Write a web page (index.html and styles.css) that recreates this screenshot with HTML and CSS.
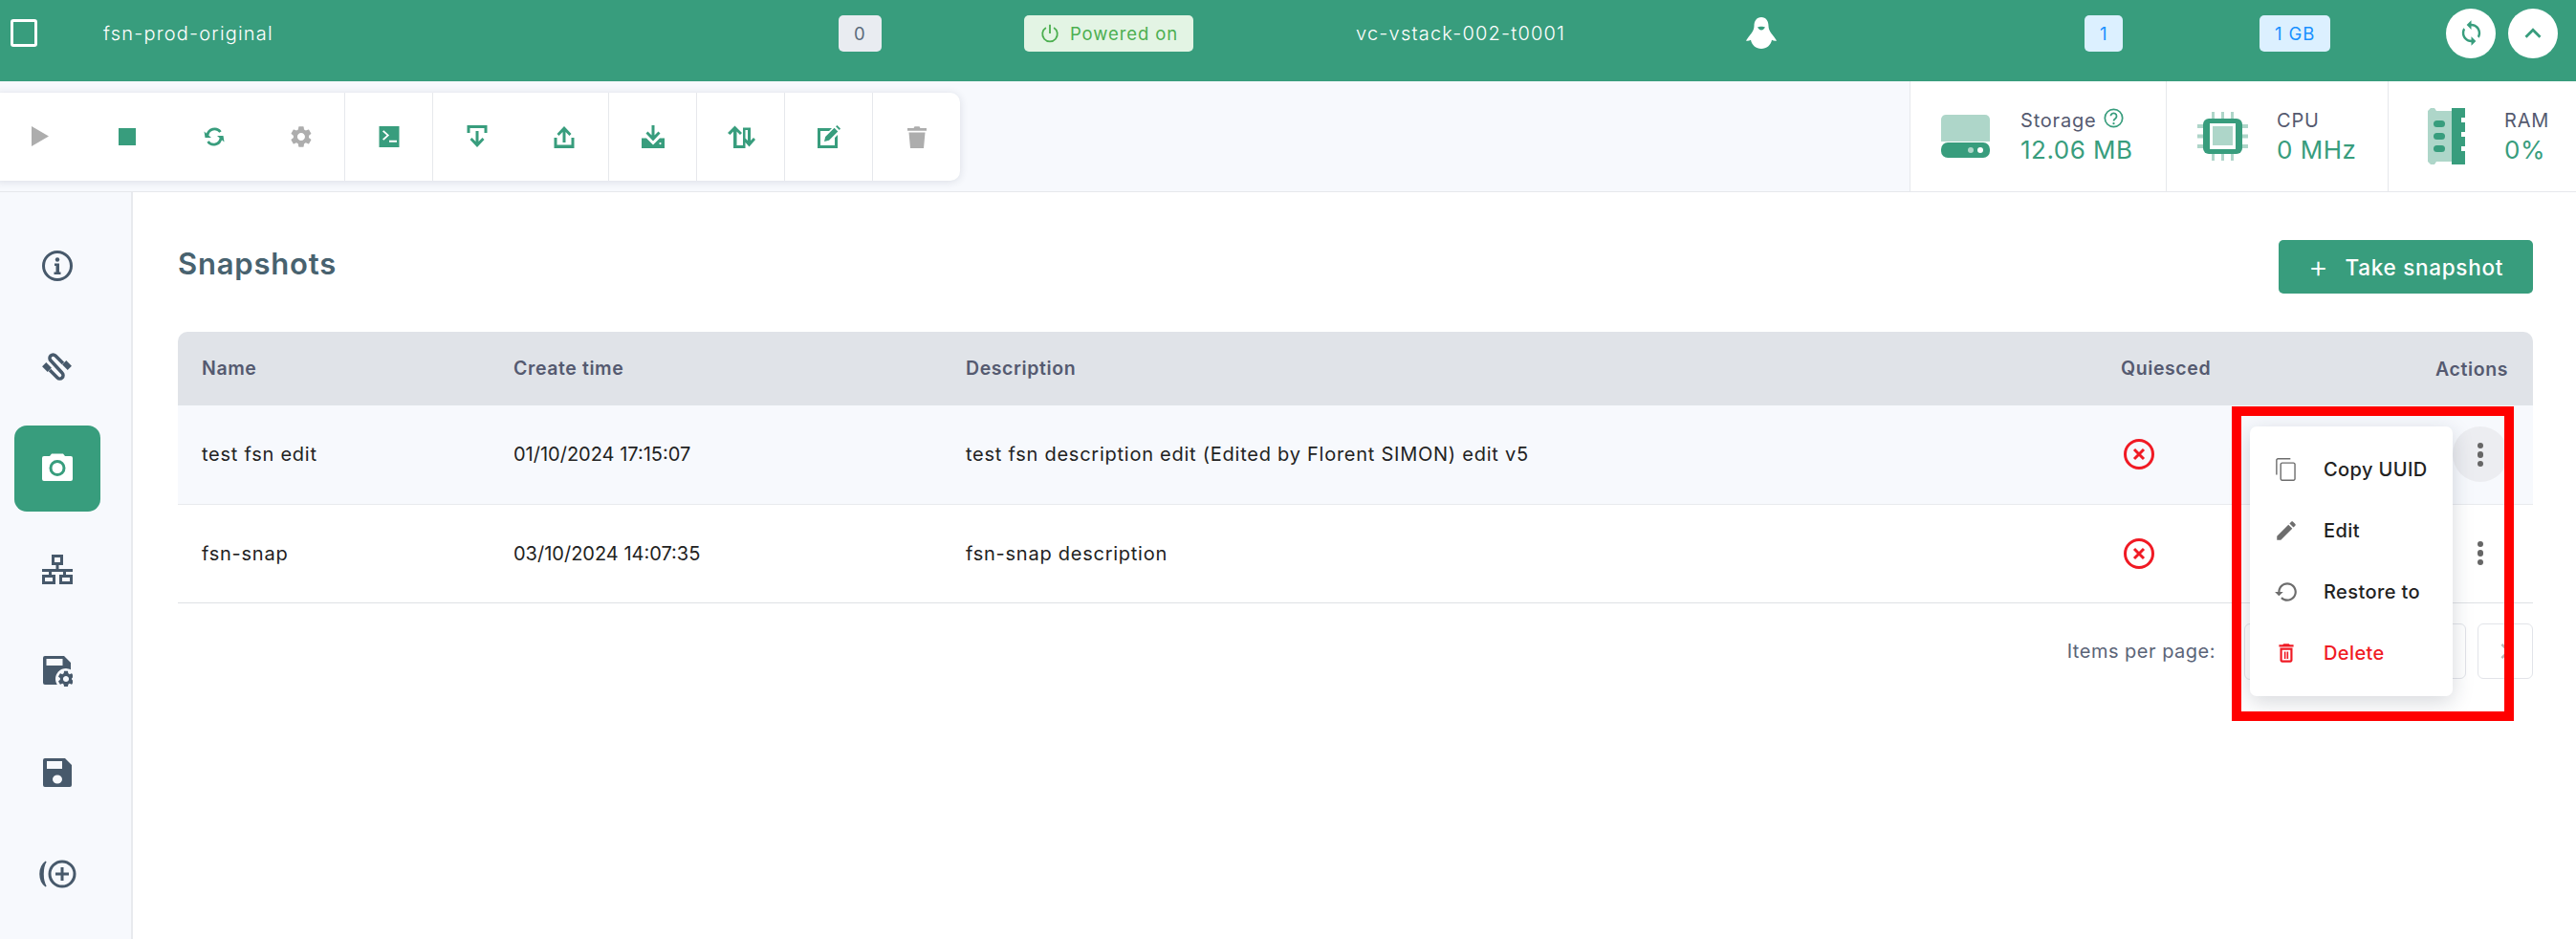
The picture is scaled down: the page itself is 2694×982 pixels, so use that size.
FILE: index.html
```html
<!DOCTYPE html>
<html lang="en">
<head>
    <meta charset="UTF-8">
    <meta name="viewport" content="width=device-width, initial-scale=1.0">
    <title>Snapshots</title>
    <link rel="stylesheet" href="styles.css">
</head>
<body>

    <header class="vm-row">
        <div class="vm-cell check-cell"><span class="checkbox"></span></div>
        <div class="vm-cell">fsn-prod-original</div>
        <div class="vm-cell"><span class="badge badge-grey">0</span></div>
        <div class="vm-cell">
            <span class="badge badge-green">
                <svg class="power-icon" viewBox="0 0 24 24"><path d="M12 2v10M7.500 5.500a8.500 8.500 0 1 0 9 0" fill="none" stroke="currentColor" stroke-width="2"/></svg>
                Powered on
            </span>
        </div>
        <div class="vm-cell">vc-vstack-002-t0001</div>
        <div class="vm-cell">
            <svg class="penguin" viewBox="0 0 32 33"><path d="M16 0c-5 0-7.500 4-7.500 9 0 3-1 5-3 8-2 2.500-4 5-5.500 7.500 1.500.5 3.500 0 5-.8C6 29 10.500 33 16 33s10-4 11-9.300c1.500.8 3.500 1.300 5 .8-1.500-2.500-3.500-5-5.500-7.500-2-3-3-5-3-8 0-5-2.500-9-7.500-9z" fill="#fff"/><path d="M12 10.500c2-1 6-1 8 0-1 1.500-2 3-4 3s-3-1.500-4-3z" fill="#389d7d"/></svg>
        </div>
        <div class="vm-cell"><span class="badge badge-blue">1</span></div>
        <div class="vm-cell"><span class="badge badge-blue">1 GB</span></div>
        <div class="vm-cell round-btns">
            <button class="round-btn sync-btn">
                <svg viewBox="0 0 24 24"><path d="M12 4V1L8 5l4 4V6c3.310 0 6 2.690 6 6 0 1.010-.25 1.970-.7 2.800l1.460 1.460C19.540 15.030 20 13.570 20 12c0-4.420-3.580-8-8-8zm0 14c-3.310 0-6-2.690-6-6 0-1.010.25-1.970.7-2.800L5.240 7.740C4.460 8.970 4 10.430 4 12c0 4.420 3.580 8 8 8v3l4-4-4-4v3z"/></svg>
            </button>
            <button class="round-btn">
                <svg viewBox="0 0 24 24"><path d="M7.410 15.410 12 10.830l4.590 4.580L18 14l-6-6-6 6z"/></svg>
            </button>
        </div>
    </header>

    <section class="tool-strip">
        <div class="toolbar">
            <div class="tool-group first">
                <span class="tool off"><svg viewBox="0 0 24 24"><path d="M3 1v21l18-10.500z"/></svg></span>
                <span class="tool"><svg viewBox="0 0 24 24"><path d="M3 3h18v18H3z"/></svg></span>
                <span class="tool">
                    <svg viewBox="0 0 24 24"><path d="M5 10.500A7.500 7.500 0 0 1 18.500 7M19 13.500A7.500 7.500 0 0 1 5.500 17" fill="none" stroke="currentColor" stroke-width="2.800"/><path d="M1.500 6.500l1 6.500h6.500zM22.500 17.500l-1-6.500H15z"/></svg>
                </span>
                <span class="tool off">
                    <svg viewBox="0 0 24 24"><path d="M19.140 12.940c.04-.3.06-.61.06-.94 0-.32-.02-.64-.07-.94l2.030-1.580c.18-.14.23-.41.12-.61l-1.920-3.320c-.12-.22-.37-.29-.59-.22l-2.390.96c-.5-.38-1.030-.7-1.620-.94l-.36-2.540c-.04-.24-.24-.41-.48-.41h-3.840c-.24 0-.43.17-.47.41l-.36 2.540c-.59.24-1.130.57-1.620.94l-2.390-.96c-.22-.08-.47 0-.59.22L2.740 8.870c-.12.21-.08.47.12.61l2.030 1.580c-.05.3-.09.63-.09.94s.02.64.07.94l-2.030 1.580c-.18.14-.23.41-.12.61l1.920 3.320c.12.22.37.29.59.22l2.390-.96c.5.38 1.030.7 1.620.94l.36 2.540c.05.24.24.41.48.41h3.840c.24 0 .44-.17.47-.41l.36-2.540c.59-.24 1.130-.56 1.620-.94l2.390.96c.22.08.47 0 .59-.22l1.920-3.320c.12-.22.07-.47-.12-.61l-2.010-1.580zM12 15.600c-1.980 0-3.600-1.620-3.600-3.600s1.620-3.600 3.600-3.600 3.600 1.620 3.600 3.600-1.620 3.600-3.600 3.600z" transform="translate(-1.500 -1.500) scale(1.120)"/></svg>
                </span>
            </div>
            <span class="tool ruled">
                <svg viewBox="0 0 24 24"><path fill-rule="evenodd" d="M1.500 1h21v22h-21zM5 6.500l4.500 4-4.500 4 1.300 1.300 5.800-5.300-5.800-5.300zM12 15.700v2.100h8v-2.100z"/></svg>
            </span>
            <div class="tool-group ruled">
                <span class="tool">
                    <svg viewBox="0 0 24 24"><path d="M1.500 0h21v8h-3V3h-15v5h-3z"/><path d="M10.500 6h3v11l4-4 2 2-7.500 8L4.500 15l2-2 4 4z"/></svg>
                </span>
                <span class="tool">
                    <svg viewBox="0 0 24 24"><path d="M1.500 13h3v7.500h15V13h3v11h-21z"/><path d="M10.500 18h3V7l4 4 2-2L12 1 4.500 9l2 2 4-4z"/></svg>
                </span>
            </div>
            <span class="tool ruled">
                <svg viewBox="0 0 24 24"><path d="M10.500 0h3v10.500l4-4 2 2-7.500 8-7.500-8 2-2 4 4z"/><path fill-rule="evenodd" d="M5 13.500l7 7 7-7h5V24H0V13.500zM19.500 18a1.100 1.100 0 1 0 0 2.200 1.100 1.100 0 0 0 0-2.200z"/></svg>
            </span>
            <span class="tool ruled wide-icon">
                <svg viewBox="0 0 30 24"><path d="M7 24V6.500L3.500 10 1 8l7.500-7.500L16 8l-2 2-3.500-3.500V21h6.500V2.500H25V16l3-3 2 2-6.500 7.500L17 15l2-2 3 3V5h-2.500v19z"/></svg>
            </span>
            <span class="tool ruled">
                <svg viewBox="0 0 24 24"><path d="M0 3h15l-3 3H3v15h15v-8l3-3v14H0z"/><path d="M7 17l1.200-5 9.300-9.300 3.800 3.800-9.300 9.300zM19 1.200l1.500-1.200 3.500 3.500-1.200 1.500z"/></svg>
            </span>
            <span class="tool ruled off">
                <svg viewBox="0 0 24 24"><path d="M2 3h6.500l1-1.800h5l1 1.800H22v2.800H2zM3.500 7.500h17L19 24H5z"/></svg>
            </span>
        </div>

        <div class="stats">
            <div class="stat stat-storage">
                <svg class="stat-icon" width="51" height="45" viewBox="0 0 51 45">
                    <path d="M5 0h41a5 5 0 0 1 5 5v23H0V5a5 5 0 0 1 5-5z" fill="#aed6c9"/>
                    <path d="M7 29h37a7 7 0 0 1 7 7v2a7 7 0 0 1-7 7H7a7 7 0 0 1-7-7v-2a7 7 0 0 1 7-7z" fill="#389d7d"/>
                    <circle cx="31" cy="37" r="3" fill="#aed6c9"/>
                    <circle cx="41" cy="37" r="3" fill="#fff"/>
                </svg>
                <div class="stat-text">
                    <span class="stat-label">Storage
                        <svg class="help-icon" viewBox="0 0 24 24"><circle cx="12" cy="12" r="10.500" fill="none" stroke="currentColor" stroke-width="2"/><path d="M8.500 9.500a3.500 3.500 0 1 1 5.500 3c-1.300.9-2 1.400-2 3" fill="none" stroke="currentColor" stroke-width="2"/><circle cx="12" cy="18.500" r="1.300" fill="currentColor"/></svg>
                    </span>
                    <span class="stat-value">12.06 MB</span>
                </div>
            </div>
            <div class="stat stat-cpu">
                <svg class="stat-icon" width="53" height="51" viewBox="0 0 53 51">
                    <path d="M15 0h3v8h-3zM25 0h3v8h-3zM35 0h3v8h-3zM15 43h3v8h-3zM25 43h3v8h-3zM35 43h3v8h-3zM0 13h8v4H0zM0 23.500h8v4H0zM0 34h8v4H0zM45 13h8v4h-8zM45 23.500h8v4h-8zM45 34h8v4h-8z" fill="#aed6c9"/>
                    <rect x="6" y="7" width="41" height="37" rx="6" fill="#389d7d"/>
                    <rect x="13" y="12" width="27" height="27" fill="#fff"/>
                    <rect x="16" y="15" width="21" height="20" fill="#aed6c9"/>
                </svg>
                <div class="stat-text">
                    <span class="stat-label">CPU</span>
                    <span class="stat-value">0 MHz</span>
                </div>
            </div>
            <div class="stat stat-ram">
                <svg class="stat-icon" width="39" height="59" viewBox="0 0 39 59">
                    <path d="M3 0h4l2 3h16v53H9l-2 3H3l-3-3V3z" fill="#aed6c9"/>
                    <path d="M25 0h14v10h-4v5h4v10h-4v5h4v10h-4v5h4v14H25z" fill="#389d7d"/>
                    <rect x="6" y="13" width="12" height="7" rx="3.500" fill="#389d7d"/>
                    <rect x="6" y="26" width="12" height="7" rx="3.500" fill="#389d7d"/>
                    <rect x="6" y="39" width="12" height="7" rx="3.500" fill="#389d7d"/>
                </svg>
                <div class="stat-text">
                    <span class="stat-label">RAM</span>
                    <span class="stat-value">0%</span>
                </div>
            </div>
        </div>
    </section>

    <div class="page">
        <nav class="sidebar">
            <a class="nav-item">
                <svg viewBox="0 0 32 32"><circle cx="16" cy="16" r="14.500" fill="none" stroke="currentColor" stroke-width="3"/><circle cx="16" cy="9.500" r="2.200"/><path d="M13 13.500h5v9h1.500v2.500h-7v-2.500H14.500v-6.500H13z"/></svg>
            </a>
            <a class="nav-item">
                <svg viewBox="0 0 32 32"><path d="M8 19l8 8a3.500 3.500 0 0 0 5-5L9 9a3.500 3.500 0 0 1 5-5l8 8" fill="none" stroke="currentColor" stroke-width="3.500"/><rect x="1" y="13" width="8" height="6" transform="rotate(45 5 16)"/><rect x="22" y="11" width="8" height="6" transform="rotate(45 26 14)"/></svg>
            </a>
            <a class="nav-item active">
                <svg viewBox="0 0 32 32"><path d="M2 3h6l2-2.500h12L24 3h6a2 2 0 0 1 2 2v22a2 2 0 0 1-2 2H2a2 2 0 0 1-2-2V5a2 2 0 0 1 2-2z" fill="#fff"/><circle cx="16" cy="15.500" r="7" fill="#fff" stroke="#389d7d" stroke-width="3"/></svg>
            </a>
            <a class="nav-item">
                <svg viewBox="0 0 32 32"><path fill-rule="evenodd" d="M10 0h12v11h-4.500v4H32v3h-7v3h7v10H18V21h4v-3H10v3h4v10H0V21h7v-3H0v-3h14.500v-4H10zM13 3v5h6V3zM3 24v4h8v-4zM21 24v4h8v-4z"/></svg>
            </a>
            <a class="nav-item">
                <svg viewBox="0 0 32 32"><path fill-rule="evenodd" d="M3 0h20l7 7v20a3 3 0 0 1-3 3H3a2 2 0 0 1-2-2V2a2 2 0 0 1 2-2zM4.500 3v7h17V3z"/><circle cx="25" cy="24" r="11" fill="#f7f9fd"/><path fill-rule="evenodd" d="M19.140 12.940c.04-.3.06-.61.06-.94 0-.32-.02-.64-.07-.94l2.030-1.580c.18-.14.23-.41.12-.61l-1.920-3.320c-.12-.22-.37-.29-.59-.22l-2.390.96c-.5-.38-1.030-.7-1.620-.94l-.36-2.540c-.04-.24-.24-.41-.48-.41h-3.840c-.24 0-.43.17-.47.41l-.36 2.540c-.59.24-1.130.57-1.620.94l-2.390-.96c-.22-.08-.47 0-.59.22L2.740 8.870c-.12.21-.08.47.12.61l2.030 1.580c-.05.3-.09.63-.09.94s.02.64.07.94l-2.030 1.580c-.18.14-.23.41-.12.61l1.920 3.320c.12.22.37.29.59.22l2.390-.96c.5.38 1.030.7 1.620.94l.36 2.540c.05.24.24.41.48.41h3.840c.24 0 .44-.17.47-.41l.36-2.540c.59-.24 1.130-.56 1.620-.94l2.390.96c.22.08.47 0 .59-.22l1.920-3.320c.12-.22.07-.47-.12-.61l-2.010-1.580zM12 15.600c-1.980 0-3.600-1.620-3.600-3.600s1.620-3.600 3.600-3.600 3.600 1.620 3.600 3.600-1.620 3.600-3.600 3.600z" transform="translate(14.800 13.800) scale(.85)"/></svg>
            </a>
            <a class="nav-item">
                <svg viewBox="0 0 32 32"><path fill-rule="evenodd" d="M3 1h21l7 7v21a2 2 0 0 1-2 2H3a2 2 0 0 1-2-2V3a2 2 0 0 1 2-2zM5 4v8h16V4zM16 18.500a5 4.500 0 1 0 0 9 5 4.500 0 0 0 0-9z"/></svg>
            </a>
            <a class="nav-item wide">
                <svg viewBox="0 0 40 30"><circle cx="25" cy="15" r="13" fill="none" stroke="currentColor" stroke-width="3"/><path d="M23.500 8h3v5.500H32v3h-5.500V22h-3v-5.500H18v-3h5.500z"/><path d="M8 2C0 8 0 22 8 28 4 21 4 9 8 2z" stroke="currentColor" stroke-width="1.500"/></svg>
            </a>
        </nav>

        <main class="content">
            <div class="title-row">
                <h1>Snapshots</h1>
                <button class="primary-btn"><span class="plus">+</span> Take snapshot</button>
            </div>

            <table class="snap-table">
                <thead>
                    <tr>
                        <th class="col-name">Name</th>
                        <th class="col-time">Create time</th>
                        <th class="col-desc">Description</th>
                        <th class="col-quiesced">Quiesced</th>
                        <th class="col-actions">Actions</th>
                    </tr>
                </thead>
                <tbody>
                    <tr class="selected">
                        <td>test fsn edit</td>
                        <td class="num">01/10/2024 17:15:07</td>
                        <td>test fsn description edit (Edited by Florent SIMON) edit v5</td>
                        <td>
                            <svg class="no-icon" viewBox="0 0 32 32"><circle cx="16" cy="16" r="14.500" fill="none" stroke="#f01a24" stroke-width="3"/><path d="M11 11l10 10M21 11L11 21" stroke="#f01a24" stroke-width="3"/></svg>
                        </td>
                        <td class="col-actions">
                            <button class="kebab open"><i></i><i></i><i></i></button>
                        </td>
                    </tr>
                    <tr>
                        <td>fsn-snap</td>
                        <td class="num">03/10/2024 14:07:35</td>
                        <td>fsn-snap description</td>
                        <td>
                            <svg class="no-icon" viewBox="0 0 32 32"><circle cx="16" cy="16" r="14.500" fill="none" stroke="#f01a24" stroke-width="3"/><path d="M11 11l10 10M21 11L11 21" stroke="#f01a24" stroke-width="3"/></svg>
                        </td>
                        <td class="col-actions">
                            <button class="kebab"><i></i><i></i><i></i></button>
                        </td>
                    </tr>
                </tbody>
            </table>

            <div class="pager">
                <span class="pager-label">Items per page:</span>
                <span class="pager-select">10</span>
                <span class="pager-btn">
                    <svg viewBox="0 0 24 24"><path d="M15.400 7.400 14 6l-6 6 6 6 1.400-1.400L10.800 12z"/></svg>
                </span>
                <span class="pager-btn">
                    <svg viewBox="0 0 24 24"><path d="M8.600 7.400 10 6l6 6-6 6-1.400-1.400L13.200 12z"/></svg>
                </span>
            </div>

            <!-- open action menu + the red mark drawn over the screenshot -->
            <ul class="menu">
                <li>
                    <svg viewBox="0 0 24 24"><path d="M16 1H4c-1.100 0-2 .9-2 2v14h1.300V3c0-.4.3-.7.7-.7h12zm3 4H8c-1.100 0-2 .9-2 2v14c0 1.100.9 2 2 2h11c1.100 0 2-.9 2-2V7c0-1.100-.9-2-2-2zm.7 16c0 .4-.3.7-.7.7H8c-.4 0-.7-.3-.7-.7V7c0-.4.3-.7.7-.7h11c.4 0 .7.3.7.7z"/></svg>
                    Copy UUID
                </li>
                <li>
                    <svg viewBox="0 0 24 24"><path d="M3 17.250V21h3.750L17.810 9.940l-3.750-3.750L3 17.250zM20.710 7.040c.39-.39.39-1.020 0-1.410l-2.340-2.340c-.39-.39-1.020-.39-1.410 0l-1.830 1.830 3.750 3.750 1.830-1.830z"/></svg>
                    Edit
                </li>
                <li>
                    <svg viewBox="0 0 24 24"><path d="M13 3c-4.970 0-9 4.030-9 9H1l3.890 3.890.07.14L9 12H6c0-3.870 3.130-7 7-7s7 3.130 7 7-3.130 7-7 7c-1.930 0-3.680-.79-4.940-2.060l-1.420 1.420C8.270 19.990 10.510 21 13 21c4.970 0 9-4.030 9-9s-4.030-9-9-9z"/></svg>
                    Restore to
                </li>
                <li class="danger">
                    <svg viewBox="0 0 24 24"><path d="M6 19c0 1.100.9 2 2 2h8c1.100 0 2-.9 2-2V7H6v12zM8 9h8v10H8V9zm7.500-5l-1-1h-5l-1 1H5v2h14V4z"/><path d="M10 10.500h1.500v7H10zM12.500 10.500H14v7h-1.500z"/></svg>
                    Delete
                </li>
            </ul>
            <div class="red-mark"></div>
        </main>
    </div>

</body>
</html>
```

FILE: styles.css
```css
* {
    box-sizing: border-box;
}
html, body {
    height: 100%;
}
body {
    font-family: Inter, "Open Sans", sans-serif;
    font-size: 20px;
    letter-spacing: 0.75px;
    color: #222;
    background: #fff;
    margin: 0;
    overflow: hidden;
}

/* top row */
.vm-row {
    display: grid;
    grid-template-columns: 108px 769px 194px 347px 408px 354px 183px 195px 1fr;
    align-items: center;
    height: 85px;
    padding-bottom: 16px;
    background: #389d7d;
    color: #fff;
    font-size: 20px;
    font-weight: 300;
    letter-spacing: 1.2px;
}
.check-cell {
    padding-left: 11px;
}
.checkbox {
    display: block;
    width: 28px;
    height: 29px;
    border: 3px solid #fff;
    border-radius: 3px;
}
.badge {
    display: inline-flex;
    align-items: center;
    justify-content: center;
    gap: 10px;
    min-width: 40px;
    height: 38px;
    padding: 0 16px;
    border-radius: 5px;
    font-size: 18.500px;
    font-weight: 400;
    letter-spacing: 0.9px;
}
.badge-grey {
    background: #e9ecf1;
    color: #5b6b7b;
}
.badge-green {
    background: #e3f4e4;
    color: #4caf50;
}
.badge-blue {
    background: #dcf0ff;
    color: #1890ff;
}
.power-icon {
    width: 22px;
    height: 22px;
}
.penguin {
    display: block;
    width: 32px;
    height: 33px;
}
.round-btns {
    display: flex;
    gap: 13px;
}
.round-btn {
    display: flex;
    align-items: center;
    justify-content: center;
    width: 52px;
    height: 52px;
    padding: 0;
    border: none;
    border-radius: 50%;
    background: #fff;
}
.round-btn svg {
    width: 34px;
    height: 34px;
    fill: #389d7d;
}
.sync-btn svg {
    width: 29px;
    height: 29px;
}

/* toolbar + stats */
.tool-strip {
    display: flex;
    justify-content: space-between;
    height: 116px;
    background: #f7f9fd;
    border-bottom: 1px solid #e6e8ec;
}
.toolbar {
    display: flex;
    height: 92px;
    margin: 12px 0 0 -4px;
    background: #fff;
    border-radius: 0 10px 10px 0;
    box-shadow: 0 1px 8px rgba(40, 50, 80, 0.14);
}
.tool-group {
    display: flex;
}
.tool {
    display: flex;
    align-items: center;
    justify-content: center;
    width: 92px;
    color: #389d7d;
}
.tool-group.first .tool {
    width: 91px;
}
.tool-group.ruled .tool {
    width: 91.500px;
}
.tool svg {
    width: 24px;
    height: 24px;
    fill: currentColor;
}
.tool.wide-icon svg {
    width: 30px;
}
.tool.off {
    color: #adadad;
}
.ruled {
    border-left: 1px solid #e6e8ec;
}
.stats {
    display: flex;
    background: #fff;
}
.stat {
    display: flex;
    align-items: center;
    border-left: 1px solid #e6e8ec;
}
.stat-storage {
    width: 268px;
    padding-left: 32px;
    gap: 32px;
}
.stat-cpu {
    width: 232px;
    padding-left: 32px;
    gap: 30px;
}
.stat-ram {
    width: 197px;
    padding-left: 41px;
    gap: 41px;
}
.stat-text {
    display: flex;
    flex-direction: column;
    gap: 2px;
}
.stat-label {
    display: flex;
    align-items: center;
    gap: 8px;
    font-size: 20px;
    letter-spacing: 0.8px;
    line-height: 26px;
    color: #555a70;
}
.stat-value {
    font-size: 26px;
    letter-spacing: 0.5px;
    line-height: 32px;
    color: #389d7d;
    white-space: nowrap;
}
.help-icon {
    width: 21px;
    height: 21px;
    margin-top: -5px;
    color: #389d7d;
}

/* sidebar and page */
.page {
    display: flex;
    height: 781px;
}
.sidebar {
    flex: 0 0 139px;
    display: flex;
    flex-direction: column;
    gap: 16px;
    padding: 32px 0 0 15px;
    background: #f7f9fd;
    border-right: 2px solid #e8eaee;
}
.nav-item {
    display: flex;
    align-items: center;
    justify-content: center;
    width: 90px;
    height: 90px;
    border-radius: 13px;
    color: #47596b;
}
.nav-item svg {
    width: 32px;
    height: 32px;
    fill: currentColor;
}
.nav-item.wide svg {
    width: 40px;
    height: 30px;
}
.nav-item.active {
    background: #389d7d;
}
.content {
    position: relative;
    flex: 1;
    padding: 50px 45px 0 47px;
}
.title-row {
    display: flex;
    align-items: center;
    justify-content: space-between;
    height: 56px;
    margin-bottom: 40px;
}
h1 {
    margin: -8px 0 0;
    font-size: 31px;
    font-weight: 600;
    letter-spacing: 0.8px;
    color: #48626f;
}
.primary-btn {
    display: flex;
    align-items: center;
    justify-content: center;
    gap: 17px;
    width: 266px;
    height: 56px;
    border: none;
    border-radius: 5px;
    background: #389d7d;
    color: #fff;
    font-family: inherit;
    font-size: 22.500px;
    font-weight: 500;
    letter-spacing: 0.7px;
}
.plus {
    font-size: 32px;
    font-weight: 300;
    line-height: 1;
}

/* table */
.snap-table {
    width: 100%;
    border-collapse: collapse;
    table-layout: fixed;
}
.snap-table th {
    height: 77px;
    padding: 0 0 2px 25px;
    background: #e0e3e8;
    color: #555a70;
    font-size: 19.500px;
    font-weight: 600;
    letter-spacing: 0.6px;
    text-align: left;
}
.snap-table th:first-child {
    border-top-left-radius: 10px;
}
.snap-table th:last-child {
    border-top-right-radius: 10px;
}
.snap-table td {
    height: 103px;
    padding: 0 0 0 25px;
    border-bottom: 1px solid #dfe1e5;
}
.snap-table td.num {
    letter-spacing: 0;
}
.snap-table tr.selected td {
    background: #f7f9fd;
    border-bottom-color: #e8eaee;
}
.col-name { width: 326px; }
.col-time { width: 473px; }
.col-desc { width: 1208px; }
.col-quiesced { width: 230px; }
.snap-table .col-actions {
    padding: 0 26px 0 0;
    text-align: right;
}
.no-icon {
    display: block;
    width: 32px;
    height: 32px;
    margin-left: 3px;
}
.kebab {
    display: inline-flex;
    flex-direction: column;
    align-items: center;
    justify-content: center;
    gap: 3px;
    width: 58px;
    height: 58px;
    padding: 0;
    border: none;
    border-radius: 50%;
    background: transparent;
    vertical-align: middle;
}
.kebab.open {
    background: #ecedf1;
}
.kebab i {
    width: 6.500px;
    height: 6.500px;
    border-radius: 50%;
    background: #666;
}

/* pager */
.pager {
    display: flex;
    align-items: center;
    justify-content: flex-end;
    gap: 12px;
    margin-top: 21px;
}
.pager-label {
    margin-right: 18px;
    letter-spacing: 0.5px;
    color: #5b6478;
}
.pager-select {
    display: flex;
    align-items: center;
    width: 162px;
    height: 59px;
    padding-left: 16px;
    border: 1px solid #e2e4e9;
    border-radius: 6px;
}
.pager-btn {
    display: flex;
    align-items: center;
    justify-content: center;
    width: 58px;
    height: 58px;
    border: 1px solid #e2e4e9;
    border-radius: 6px;
}
.pager-btn svg {
    width: 32px;
    height: 32px;
    fill: #b9b9b9;
}

/* open menu */
.menu {
    position: absolute;
    left: 2214px;
    top: 245px;
    width: 212px;
    height: 282px;
    margin: 0;
    padding: 13px 0;
    list-style: none;
    background: #fff;
    border-radius: 7px;
    box-shadow: 0 6px 22px rgba(30, 40, 60, 0.18);
}
.menu li {
    display: flex;
    align-items: center;
    gap: 26px;
    height: 64px;
    padding-left: 25px;
    font-size: 20px;
    font-weight: 500;
    letter-spacing: 0.4px;
    color: #222;
    white-space: nowrap;
}
.menu li svg {
    flex: none;
    width: 26px;
    height: 26px;
    fill: #6d6d6d;
}
.menu li.danger {
    color: #f01a24;
}
.menu li.danger svg {
    fill: #f01a24;
}
.red-mark {
    position: absolute;
    left: 2195px;
    top: 224px;
    width: 295px;
    height: 329px;
    border: 10px solid #f00;
}
```
